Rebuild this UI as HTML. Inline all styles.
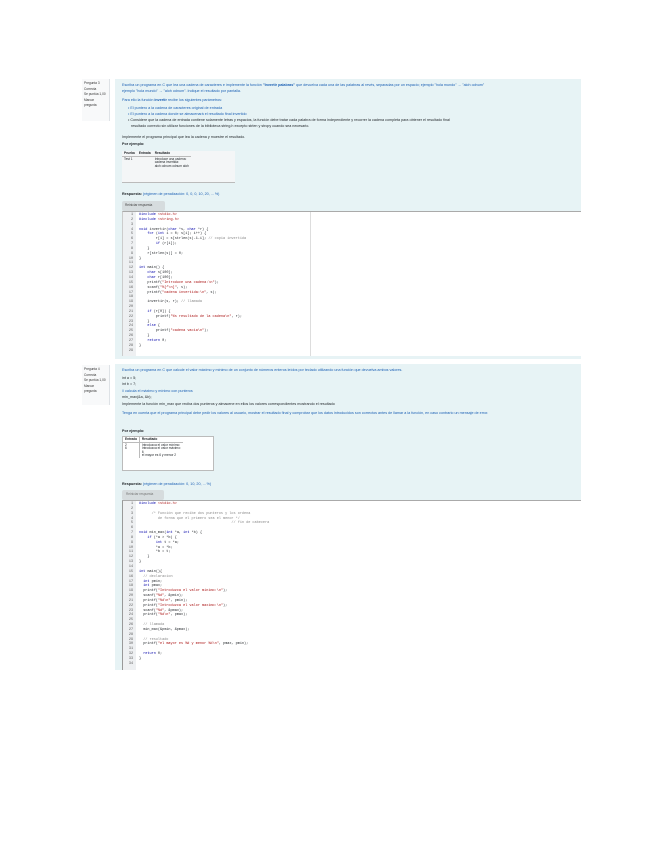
<!DOCTYPE html>
<html><head><meta charset="utf-8"><style>
*{margin:0;padding:0;box-sizing:border-box}
body{width:655px;height:848px;background:#fff;position:relative;overflow:hidden;font-family:"Liberation Sans",sans-serif;font-size:3.7px;line-height:1;color:#1d2125}
.a{position:absolute;white-space:nowrap}
.info{position:absolute;background:#f8f9fa;border-right:1px solid #dee2e6;font-size:3.2px;line-height:5.5px;padding:2px;color:#333}
.panel{position:absolute;background:#e7f3f5}
.bl{color:#1a5fb4}
.ed{position:absolute;background:#fff;border-top:1px solid #aaa;border-left:1px solid #ccc}
.gut{position:absolute;left:0;top:0;bottom:0;width:13px;background:#eef0f2}
.code{position:absolute;font-family:"Liberation Mono",monospace;font-size:3.5px;white-space:pre;line-height:4.85px}
.ln{position:absolute;font-family:"Liberation Mono",monospace;font-size:3.4px;line-height:4.85px;color:#555;text-align:right;width:9px}
.k{color:#0000aa}.s{color:#a11}.c{color:#888}
table{border-collapse:collapse;font-size:3.2px}
td,th{padding:1px 2px;text-align:left;vertical-align:top}
</style></head><body>

<div class="info" style="left:82px;top:79px;width:28px;height:42px">Pregunta 3<br>Correcta<br>Se puntúa 1,00<br>Marcar pregunta</div>
<div class="panel" style="left:115px;top:79px;width:466px;height:280px"></div>
<div class="a bl" style="left:122px;top:84px">Escriba un programa en C que lea una cadena de caracteres e implemente la función <b>"Invertir palabras"</b> que devuelva cada una de las palabras al revés, separadas por un espacio; ejemplo "hola mundo" → "aloh odnum"</div>
<div class="a bl" style="left:122px;top:90px">ejemplo "hola mundo" → "aloh odnum". Indique el resultado por pantalla.</div>
<div class="a bl" style="left:122px;top:99px">Para ello la función <b>invertir</b> recibe los siguientes parámetros:</div>
<div class="a bl" style="left:128px;top:107px">• El puntero a la cadena de caracteres original de entrada</div>
<div class="a bl" style="left:128px;top:113px">• El puntero a la cadena donde se almacenará el resultado final invertido</div>
<div class="a" style="left:128px;top:119px">• Considere que la cadena de entrada contiene solamente letras y espacios, la función debe tratar cada palabra de forma independiente y recorrer la cadena completa para obtener el resultado final</div>
<div class="a" style="left:131px;top:125px">resultado correcto sin utilizar funciones de la biblioteca string.h excepto strlen y strcpy cuando sea necesario.</div>
<div class="a" style="left:122px;top:136px">Implemente el programa principal que lea la cadena y muestre el resultado.</div>
<div class="a" style="left:122px;top:143px"><b>Por ejemplo:</b></div>
<div class="a" style="left:122px;top:151px;width:113px;height:32px;background:#f4f6f7;border-bottom:1px solid #bbb">
<table><tr style="border-bottom:1px solid #bbb"><th>Prueba</th><th>Entrada</th><th>Resultado</th></tr>
<tr><td>Test 1</td><td></td><td>Introduce una cadena:<br>cadena invertida:<br>aloh odnum odnum aloh</td></tr></table></div>
<div class="a" style="left:122px;top:193px"><b>Respuesta:</b> <span class="bl">(régimen de penalización: 0, 0, 0, 10, 20, ... %)</span></div>
<div class="a" style="left:122px;top:201px;width:43px;height:10px;background:#d6dcde;border-radius:2px;font-size:3.2px;padding:3px 3px;color:#444">Reiniciar respuesta</div>
<div class="ed" style="left:122px;top:211px;width:459px;height:145px">
<div class="gut"></div>
<div style="position:absolute;left:187px;top:0;bottom:0;width:1px;background:#ddd"></div>
<div class="ln" style="left:1px;top:1px">1<br>2<br>3<br>4<br>5<br>6<br>7<br>8<br>9<br>10<br>11<br>12<br>13<br>14<br>15<br>16<br>17<br>18<br>19<br>20<br>21<br>22<br>23<br>24<br>25<br>26<br>27<br>28<br>29</div>
<div class="code" style="left:16px;top:1px"><span class="k">#include</span> <span class="s">&lt;stdio.h&gt;</span>
<span class="k">#include</span> <span class="s">&lt;string.h&gt;</span>

<span class="k">void</span> invertir(<span class="k">char</span> *s, <span class="k">char</span> *r) {
    <span class="k">for</span> (<span class="k">int</span> i = 0; s[i]; i++) {
        r[i] = s[strlen(s)-1-i]; <span class="c">// copia invertida</span>
        <span class="k">if</span> (r[i]);
    }
    r[strlen(s)] = 0;
}

<span class="k">int</span> main() {
    <span class="k">char</span> s[100];
    <span class="k">char</span> r[100];
    printf(<span class="s">"Introduce una cadena:\n"</span>);
    scanf(<span class="s">"%[^\n]"</span>, s);
    printf(<span class="s">"cadena invertida:\n"</span>, s);

    invertir(s, r); <span class="c">// llamada</span>

    <span class="k">if</span> (r[0]) {
        printf(<span class="s">"%s resultado de la cadena\n"</span>, r);
    }
    <span class="k">else</span> {
        printf(<span class="s">"cadena vacia\n"</span>);
    }
    <span class="k">return</span> 0;
}</div>
</div>

<div class="info" style="left:82px;top:365px;width:28px;height:40px">Pregunta 4<br>Correcta<br>Se puntúa 1,00<br>Marcar pregunta</div>
<div class="panel" style="left:115px;top:364px;width:466px;height:306px"></div>
<div class="a bl" style="left:122px;top:369px">Escriba un programa en C que calcule el valor máximo y mínimo de un conjunto de números enteros leídos por teclado utilizando una función que devuelva ambos valores.</div>
<div class="a" style="left:122px;top:377px">int a = 5;</div>
<div class="a" style="left:122px;top:383px">int b = 7;</div>
<div class="a bl" style="left:122px;top:390px">// calcula el máximo y mínimo con punteros</div>
<div class="a" style="left:122px;top:396px">min_max(&amp;a, &amp;b);</div>
<div class="a" style="left:122px;top:403px">Implemente la función min_max que reciba dos punteros y almacene en ellos los valores correspondientes mostrando el resultado</div>
<div class="a bl" style="left:122px;top:412px">Tenga en cuenta que el programa principal debe pedir los valores al usuario, mostrar el resultado final y comprobar que los datos introducidos son correctos antes de llamar a la función, en caso contrario un mensaje de error.</div>
<div class="a" style="left:122px;top:430px"><b>Por ejemplo:</b></div>
<div class="a" style="left:122px;top:436px;width:92px;height:35px;background:#fff;border:1px solid #bbb">
<table><tr style="border-bottom:1px solid #bbb"><th style="border-right:1px solid #bbb">Entrada</th><th>Resultado</th></tr>
<tr><td style="border-right:1px solid #bbb">2<br>6</td><td>Introduzca el valor mínimo:<br>Introduzca el valor máximo:<br>6<br>el mayor es 6 y menor 2</td></tr></table></div>
<div class="a" style="left:122px;top:483px"><b>Respuesta:</b> <span class="bl">(régimen de penalización: 0, 10, 20, ... %)</span></div>
<div class="a" style="left:122px;top:490px;width:42px;height:10px;background:#d6dcde;border-radius:2px;font-size:3.2px;padding:3px 4px;color:#777">Reiniciar respuesta</div>
<div class="ed" style="left:122px;top:500px;width:459px;height:170px;border-left:1px solid #999">
<div class="gut"></div>
<div class="ln" style="left:1px;top:1px">1<br>2<br>3<br>4<br>5<br>6<br>7<br>8<br>9<br>10<br>11<br>12<br>13<br>14<br>15<br>16<br>17<br>18<br>19<br>20<br>21<br>22<br>23<br>24<br>25<br>26<br>27<br>28<br>29<br>30<br>31<br>32<br>33<br>34</div>
<div class="code" style="left:16px;top:1px"><span class="k">#include</span> <span class="s">&lt;stdio.h&gt;</span>

      <span class="c">/* Función que recibe dos punteros y los ordena</span>
<span class="c">         de forma que el primero sea el menor */</span>
<span class="c">                                            // fin de cabecera</span>

<span class="k">void</span> min_max(<span class="k">int</span> *a, <span class="k">int</span> *b) {
    <span class="k">if</span> (*a &gt; *b) {
        <span class="k">int</span> t = *a;
        *a = *b;
        *b = t;
    }
}

<span class="k">int</span> main(){
  <span class="c">// declaracion</span>
  <span class="k">int</span> pmin;
  <span class="k">int</span> pmax;
  printf(<span class="s">"Introduzca el valor minimo:\n"</span>);
  scanf(<span class="s">"%d"</span>, &amp;pmin);
  printf(<span class="s">"%d\n"</span>, pmin);
  printf(<span class="s">"Introduzca el valor maximo:\n"</span>);
  scanf(<span class="s">"%d"</span>, &amp;pmax);
  printf(<span class="s">"%d\n"</span>, pmax);

  <span class="c">// llamada</span>
  min_max(&amp;pmin, &amp;pmax);

  <span class="c">// resultado</span>
  printf(<span class="s">"el mayor es %d y menor %d\n"</span>, pmax, pmin);

  <span class="k">return</span> 0;
}</div>
</div>
</body></html>
